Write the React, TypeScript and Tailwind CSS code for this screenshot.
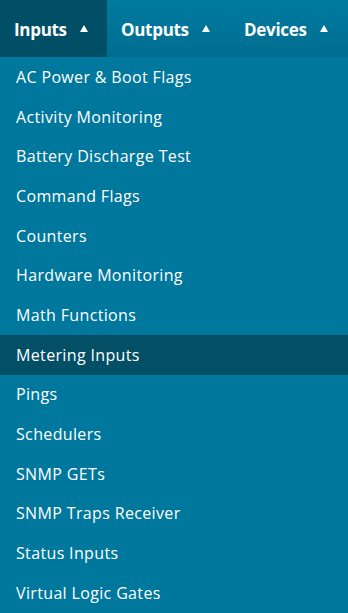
import React from "react";

const items = [
  "AC Power & Boot Flags",
  "Activity Monitoring",
  "Battery Discharge Test",
  "Command Flags",
  "Counters",
  "Hardware Monitoring",
  "Math Functions",
  "Metering Inputs",
  "Pings",
  "Schedulers",
  "SNMP GETs",
  "SNMP Traps Receiver",
  "Status Inputs",
  "Virtual Logic Gates",
];

function Tri() {
  return (
    <svg width="8" height="7" viewBox="0 0 8 7" className="ml-[13px] mb-[3px]">
      <polygon points="4,0 8,7 0,7" fill="white" />
    </svg>
  );
}

export default function App() {
  const tabs = [
    { label: "Inputs", active: true, w: "w-[107px]" },
    { label: "Outputs", active: false, w: "w-[123px]" },
    { label: "Devices", active: false, w: "flex-1" },
  ];
  return (
    <div
      className="w-[348px] h-[613px] bg-[#00779c] overflow-hidden"
      style={{ fontFamily: '"Open Sans", "Noto Sans", sans-serif' }}
    >
      <div className="flex h-[57px] bg-gradient-to-b from-[#007ba1] to-[#006d8f]">
        {tabs.map((t) => (
          <div
            key={t.label}
            className={`${t.w} flex items-center pl-[14px] pt-[3px] text-white font-bold text-[17px] ${
              t.active ? "bg-[#004f66]" : ""
            }`}
          >
            <span className="tracking-[-0.3px]">{t.label}</span>
            <Tri />
          </div>
        ))}
      </div>
      <div className="flex flex-col">
        {items.map((it) => (
          <div
            key={it}
            className={`h-[39.7px] flex items-center pl-[16px] text-white text-[16px] font-medium tracking-[0.35px] ${
              it === "Metering Inputs" ? "bg-[#024f66]" : ""
            }`}
          >
            {it}
          </div>
        ))}
      </div>
    </div>
  );
}
